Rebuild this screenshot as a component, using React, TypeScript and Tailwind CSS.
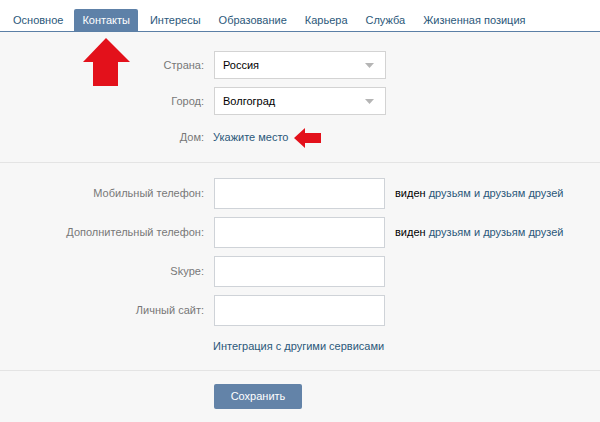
import React from 'react';

const tabs = ['Основное', 'Контакты', 'Интересы', 'Образование', 'Карьера', 'Служба', 'Жизненная позиция'];

function Caret() {
  return (
    <svg width="9" height="5" viewBox="0 0 9 5" className="shrink-0">
      <path d="M0 0 L9 0 L4.5 5 Z" fill="#b5b5b5" />
    </svg>
  );
}

function Row({ label, children }: { label: string; children: React.ReactNode }) {
  return (
    <div className="flex items-center">
      <div className="w-[205px] pr-[1px] text-right text-[#777]">{label}</div>
      <div className="ml-[9px] flex items-center">{children}</div>
    </div>
  );
}

function Select({ value }: { value: string }) {
  return (
    <div className="flex h-[28px] w-[172px] items-center justify-between border border-[#d3d3d3] bg-white pl-[8px] pr-[11px] text-black">
      <span>{value}</span>
      <Caret />
    </div>
  );
}

function Field() {
  return <div className="h-[31px] w-[171px] border border-[#cfd3d8] bg-white" />;
}

function Visibility() {
  return (
    <span className="ml-[10px] whitespace-nowrap">
      <span className="text-black">виден</span>{' '}
      <span className="text-[#2b587a]">друзьям и друзьям друзей</span>
    </span>
  );
}

export default function App() {
  return (
    <div className="relative h-[422px] w-[600px] overflow-hidden bg-[#f7f7f7] text-[11px] leading-none" style={{ fontFamily: '"Liberation Sans", Arial, sans-serif' }}>
      <div className="flex h-[32px] items-end border-b border-[#5b7fa6] bg-white pl-[4px]">
        {tabs.map((t, i) => (
          <div
            key={t}
            className={
              i === 1
                ? 'ml-[2px] mr-[3px] flex h-[22px] items-center rounded-t-[2px] bg-[#5e81a8] px-[8px] text-white'
                : 'flex h-[22px] items-center px-[9px] text-[#2b587a]'
            }
          >
            {t}
          </div>
        ))}
      </div>

      <div className="flex flex-col gap-[8px] pt-[19px]">
        <Row label="Страна:">
          <Select value="Россия" />
        </Row>
        <Row label="Город:">
          <Select value="Волгоград" />
        </Row>
        <div className="flex h-[28px] items-center">
          <div className="w-[205px] pr-[1px] text-right text-[#777]">Дом:</div>
          <div className="ml-[8px] text-[#2b587a]">Укажите место</div>
        </div>
      </div>

      <div className="mt-[11px] h-px bg-[#e4e4e4]" />

      <div className="flex flex-col gap-[8px] pt-[15px]">
        <Row label="Мобильный телефон:">
          <Field />
          <Visibility />
        </Row>
        <Row label="Дополнительный телефон:">
          <Field />
          <Visibility />
        </Row>
        <Row label="Skype:">
          <Field />
        </Row>
        <Row label="Личный сайт:">
          <Field />
        </Row>
      </div>

      <div className="mt-[12px] flex h-[16px] items-center pl-[213px] text-[#2b587a]">Интеграция с другими сервисами</div>

      <div className="mt-[16px] h-px bg-[#e4e4e4]" />

      <div className="pl-[214px] pt-[13px]">
        <button className="flex h-[25px] w-[88px] items-center justify-center rounded-[2px] bg-[#6383a8] text-white">
          Сохранить
        </button>
      </div>

      <svg className="pointer-events-none absolute left-[80px] top-[35px]" width="54" height="54" viewBox="0 0 54 54">
        <path d="M26 3 L50 27 L38 27 L38 51 L13 51 L13 27 L3 27 Z" fill="#e3111b" />
      </svg>
      <svg className="pointer-events-none absolute left-[292px] top-[126px]" width="32" height="24" viewBox="0 0 32 24">
        <path d="M2 12 L13 2 L13 7 L29 7 L29 17 L13 17 L13 22 Z" fill="#e3111b" />
      </svg>
    </div>
  );
}
